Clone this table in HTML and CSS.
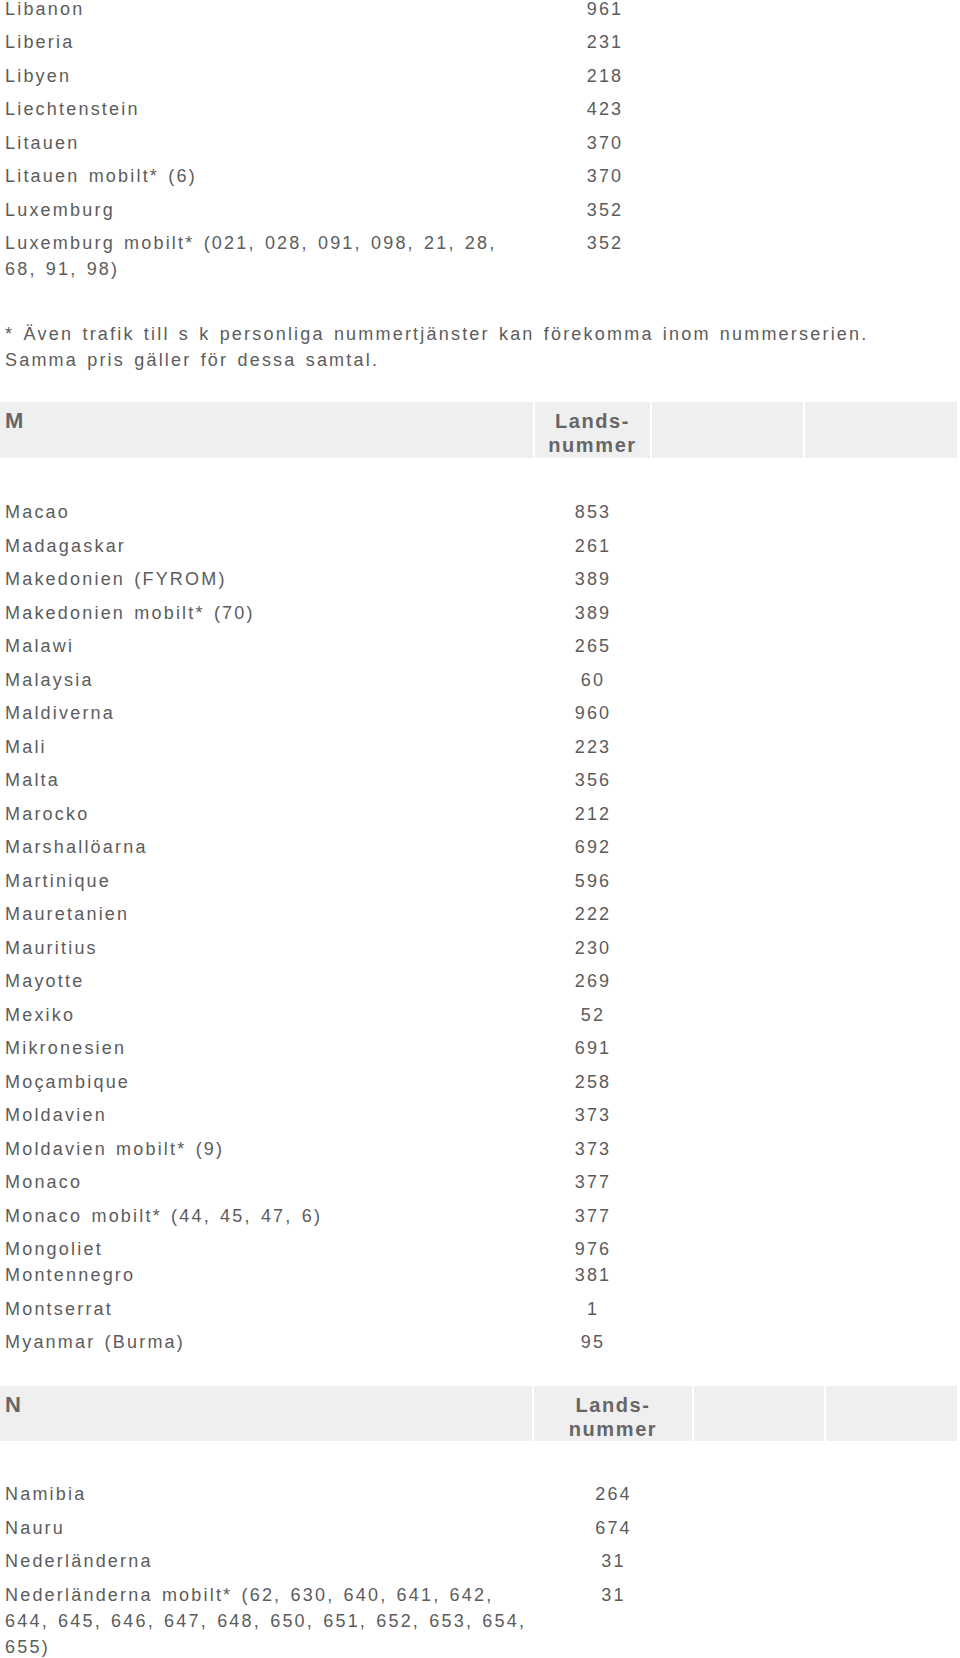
FILE: index.html
```html
<!DOCTYPE html>
<html lang="sv">
<head>
<meta charset="utf-8">
<title>Landsnummer</title>
<link rel="stylesheet" href="styles.css">
</head>
<body>
<div class="page">
  <section class="list list-l">
    <div class="row"><span class="name">Libanon</span><span class="num">961</span></div>
    <div class="row"><span class="name">Liberia</span><span class="num">231</span></div>
    <div class="row"><span class="name">Libyen</span><span class="num">218</span></div>
    <div class="row"><span class="name">Liechtenstein</span><span class="num">423</span></div>
    <div class="row"><span class="name">Litauen</span><span class="num">370</span></div>
    <div class="row"><span class="name">Litauen mobilt* (6)</span><span class="num">370</span></div>
    <div class="row"><span class="name">Luxemburg</span><span class="num">352</span></div>
    <div class="row"><span class="name">Luxemburg mobilt* (021, 028, 091, 098, 21, 28, 68, 91, 98)</span><span class="num">352</span></div>
  </section>

  <p class="note">* Även trafik till s k personliga nummertjänster kan förekomma inom nummerserien. Samma pris gäller för dessa samtal.</p>

  <div class="head head-m">
    <div class="cell letter">M</div>
    <div class="cell lands">Lands-<br>nummer</div>
    <div class="cell"></div>
    <div class="cell"></div>
  </div>

  <section class="list list-m">
    <div class="row"><span class="name">Macao</span><span class="num">853</span></div>
    <div class="row"><span class="name">Madagaskar</span><span class="num">261</span></div>
    <div class="row"><span class="name">Makedonien (FYROM)</span><span class="num">389</span></div>
    <div class="row"><span class="name">Makedonien mobilt* (70)</span><span class="num">389</span></div>
    <div class="row"><span class="name">Malawi</span><span class="num">265</span></div>
    <div class="row"><span class="name">Malaysia</span><span class="num">60</span></div>
    <div class="row"><span class="name">Maldiverna</span><span class="num">960</span></div>
    <div class="row"><span class="name">Mali</span><span class="num">223</span></div>
    <div class="row"><span class="name">Malta</span><span class="num">356</span></div>
    <div class="row"><span class="name">Marocko</span><span class="num">212</span></div>
    <div class="row"><span class="name">Marshallöarna</span><span class="num">692</span></div>
    <div class="row"><span class="name">Martinique</span><span class="num">596</span></div>
    <div class="row"><span class="name">Mauretanien</span><span class="num">222</span></div>
    <div class="row"><span class="name">Mauritius</span><span class="num">230</span></div>
    <div class="row"><span class="name">Mayotte</span><span class="num">269</span></div>
    <div class="row"><span class="name">Mexiko</span><span class="num">52</span></div>
    <div class="row"><span class="name">Mikronesien</span><span class="num">691</span></div>
    <div class="row"><span class="name">Moçambique</span><span class="num">258</span></div>
    <div class="row"><span class="name">Moldavien</span><span class="num">373</span></div>
    <div class="row"><span class="name">Moldavien mobilt* (9)</span><span class="num">373</span></div>
    <div class="row"><span class="name">Monaco</span><span class="num">377</span></div>
    <div class="row"><span class="name">Monaco mobilt* (44, 45, 47, 6)</span><span class="num">377</span></div>
    <div class="row"><span class="name">Mongoliet<br>Montennegro</span><span class="num">976<br>381</span></div>
    <div class="row"><span class="name">Montserrat</span><span class="num">1</span></div>
    <div class="row"><span class="name">Myanmar (Burma)</span><span class="num">95</span></div>
  </section>

  <div class="head head-n">
    <div class="cell letter">N</div>
    <div class="cell lands">Lands-<br>nummer</div>
    <div class="cell"></div>
    <div class="cell"></div>
  </div>

  <section class="list list-n">
    <div class="row"><span class="name">Namibia</span><span class="num">264</span></div>
    <div class="row"><span class="name">Nauru</span><span class="num">674</span></div>
    <div class="row"><span class="name">Nederländerna</span><span class="num">31</span></div>
    <div class="row"><span class="name">Nederländerna mobilt* (62, 630, 640, 641, 642, 644, 645, 646, 647, 648, 650, 651, 652, 653, 654, 655)</span><span class="num">31</span></div>
  </section>
</div>
</body>
</html>
```

FILE: styles.css
```css
html, body {
  margin: 0;
  padding: 0;
  background: #ffffff;
}

body {
  font-family: "Liberation Sans", Arial, sans-serif;
  font-size: 18px;
  letter-spacing: 2.2px;
  word-spacing: 2px;
  color: #5c5c5c;
  overflow: hidden;
}

.page {
  width: 960px;
  margin-top: -4.5px;
}

.list {
  display: flex;
  flex-direction: column;
}

.row {
  display: grid;
  line-height: 26px;
  padding-bottom: 7.5px;
}

.list-l .row {
  grid-template-columns: 532px 146px;
}

.list-m .row {
  grid-template-columns: 535px 116px;
}

.list-n .row {
  grid-template-columns: 534px 159px;
}

.name {
  padding-left: 5px;
  padding-right: 20px;
}

.list-n .name {
  padding-right: 0;
}

.num {
  text-align: center;
}

.note {
  margin: 31.5px 0 0;
  padding-left: 5px;
  line-height: 26px;
  width: 890px;
}

.head {
  display: grid;
  column-gap: 2px;
  margin-top: 29px;
  width: 957px;
  height: 56px;
  font-weight: bold;
  font-size: 20px;
  letter-spacing: 1.6px;
  color: #666666;
}

.head-m {
  grid-template-columns: 533px 115px 151px 152px;
}

.head-n {
  grid-template-columns: 532px 158px 130px 131px;
  margin-top: 23.5px;
  height: 55px;
}

.cell {
  background: #efefef;
  padding-top: 7px;
  line-height: 24px;
}

.letter {
  padding-left: 5px;
  font-size: 22px;
}

.lands {
  text-align: center;
}

.list-m {
  margin-top: 41px;
}

.list-n {
  margin-top: 40px;
}
```
